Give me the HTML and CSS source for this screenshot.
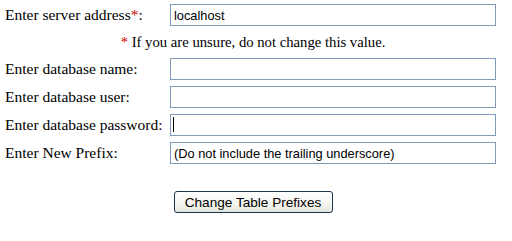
FILE: index.html
```html
<!DOCTYPE html>
<html lang="en">
<head>
    <meta charset="UTF-8">
    <title>Change Table Prefixes</title>
    <link rel="stylesheet" href="styles.css">
</head>
<body>
    <form class="prefix-form">
        <div class="row">
            <label class="label" for="server">Enter server address<span class="req">*</span>:</label>
            <input type="text" id="server" class="field" value="localhost">
        </div>
        <div class="note"><span class="req">*</span> If you are unsure, do not change this value.</div>
        <div class="row">
            <label class="label" for="dbname">Enter database name:</label>
            <input type="text" id="dbname" class="field">
        </div>
        <div class="row">
            <label class="label" for="dbuser">Enter database user:</label>
            <input type="text" id="dbuser" class="field">
        </div>
        <div class="row">
            <label class="label" for="dbpass">Enter database password:</label>
            <input type="password" id="dbpass" class="field field-active">
        </div>
        <div class="row">
            <label class="label" for="prefix">Enter New Prefix:</label>
            <input type="text" id="prefix" class="field" value="(Do not include the trailing underscore)">
        </div>
        <div class="actions">
            <button type="button" class="submit-btn">Change Table Prefixes</button>
        </div>
    </form>
</body>
</html>
```

FILE: styles.css
```css
body {
    margin: 0;
    padding: 0;
    background-color: #fff;
    font-family: "Liberation Serif", "Times New Roman", serif;
    font-size: 15.5px;
    color: #000;
}
.prefix-form {
    width: 496px;
    padding: 4px 0 0 5px;
}
.row {
    display: flex;
    align-items: center;
    height: 22px;
    margin-bottom: 6px;
}
.label {
    width: 165px;
    flex-shrink: 0;
}
.req {
    color: #cc0000;
}
.field {
    box-sizing: border-box;
    width: 326px;
    height: 22px;
    margin: 0;
    padding: 0 3px;
    border: 1px solid #7f9db9;
    background-color: #fff;
    font-family: "Liberation Sans", Arial, sans-serif;
    font-size: 12.8px;
    color: #000;
}
.field:focus {
    outline: none;
}
/* text caret of the focused field */
.field-active {
    background: #fff linear-gradient(#000, #000) no-repeat 2px 2px / 1px 15px;
}
.note {
    height: 32px;
    line-height: 32px;
    margin-top: -6px;
    font-size: 14.7px;
    text-align: center;
}
.actions {
    margin-top: 27px;
    text-align: center;
}
.submit-btn {
    box-sizing: border-box;
    width: 159px;
    height: 22px;
    padding: 0;
    border: 1px solid #1c3553;
    border-radius: 3px;
    background: linear-gradient(#ffffff, #f2f2ec 70%, #e2e2d8);
    font-family: "Liberation Sans", Arial, sans-serif;
    font-size: 13.6px;
    color: #000;
    cursor: pointer;
}
```
